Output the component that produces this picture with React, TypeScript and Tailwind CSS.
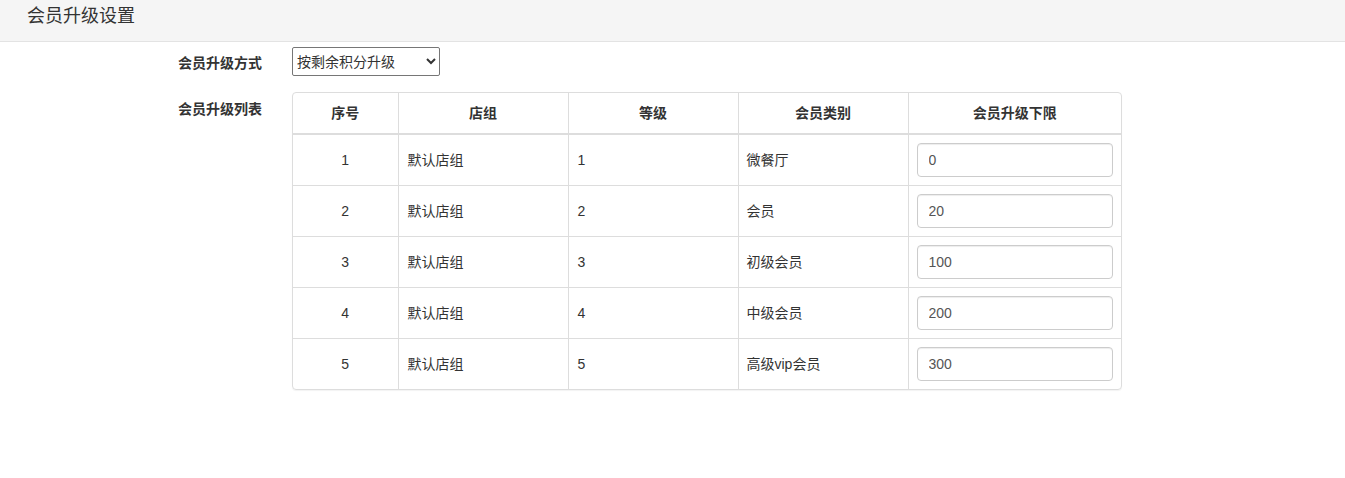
import React from "react";

const rows = [
  { no: 1, group: "默认店组", level: "1", type: "微餐厅", min: "0" },
  { no: 2, group: "默认店组", level: "2", type: "会员", min: "20" },
  { no: 3, group: "默认店组", level: "3", type: "初级会员", min: "100" },
  { no: 4, group: "默认店组", level: "4", type: "中级会员", min: "200" },
  { no: 5, group: "默认店组", level: "5", type: "高级vip会员", min: "300" },
];

export default function App() {
  return (
    <div
      className="min-h-[478px] bg-white text-[14px] text-[#333]"
      style={{ fontFamily: '"Liberation Sans", "Noto Sans CJK SC", sans-serif' }}
    >
      {/* Title bar */}
      <div className="h-[42px] bg-[#f5f5f5] border-b border-[#e3e3e3] pl-[27px] flex items-center">
        <h1 className="text-[18px] leading-none pb-[10px] pt-0 text-[#333]">会员升级设置</h1>
      </div>

      {/* Upgrade mode */}
      <div className="flex items-center mt-[5px]">
        <label className="w-[262px] text-right font-bold pt-[3px]">会员升级方式</label>
        <select
          defaultValue="remain"
          className="ml-[30px] w-[148px] h-[29px] border border-[#767676] rounded-[2px] bg-white pl-0 pr-[2px] text-[14px] text-[#333]"
        >
          <option value="remain">按剩余积分升级</option>
          <option value="total">按累计积分升级</option>
        </select>
      </div>

      {/* Upgrade list */}
      <div className="flex items-start mt-[16px]">
        <label className="w-[262px] text-right font-bold pt-[8px] leading-[18px]">会员升级列表</label>
        <div className="ml-[30px] w-[830px] border border-[#ddd] rounded-[4px] shadow-[0_1px_1px_rgba(0,0,0,0.05)] overflow-hidden">
          <table className="w-full border-collapse table-fixed">
            <colgroup>
              <col className="w-[105px]" />
              <col className="w-[170px]" />
              <col className="w-[170px]" />
              <col className="w-[170px]" />
              <col />
            </colgroup>
            <thead>
              <tr className="h-[41px] border-b-2 border-[#ddd]">
                <th className="font-bold text-center">序号</th>
                <th className="font-bold text-center border-l border-[#ddd]">店组</th>
                <th className="font-bold text-center border-l border-[#ddd]">等级</th>
                <th className="font-bold text-center border-l border-[#ddd]">会员类别</th>
                <th className="font-bold text-center border-l border-[#ddd]">会员升级下限</th>
              </tr>
            </thead>
            <tbody>
              {rows.map((r, i) => (
                <tr key={r.no} className={`h-[51px] ${i > 0 ? "border-t border-[#ddd]" : ""}`}>
                  <td className="text-center pt-[2px]">{r.no}</td>
                  <td className="border-l border-[#ddd] px-[9px] pt-[2px]">{r.group}</td>
                  <td className="border-l border-[#ddd] px-[9px] pt-[2px]">{r.level}</td>
                  <td className="border-l border-[#ddd] px-[8px] pt-[2px]">{r.type}</td>
                  <td className="border-l border-[#ddd] px-[8px]">
                    <input
                      defaultValue={r.min}
                      className="w-[196px] h-[34px] border border-[#ccc] rounded-[4px] px-[11px] text-[14px] text-[#555] shadow-[inset_0_1px_1px_rgba(0,0,0,0.075)] outline-none"
                    />
                  </td>
                </tr>
              ))}
            </tbody>
          </table>
        </div>
      </div>
    </div>
  );
}
